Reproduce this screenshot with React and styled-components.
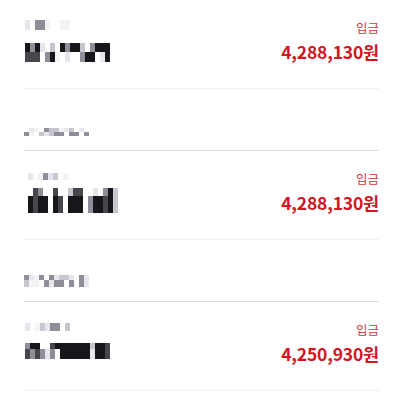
import React from 'react';
import styled, { createGlobalStyle } from 'styled-components';

// Estilos globais da página.
const GlobalStyle = createGlobalStyle`
    html, body {
        margin: 0;
        padding: 0;
        background: #fff;
    }
    body {
        font-family: "Noto Sans CJK KR", "Noto Sans", sans-serif;
    }
`;

// Tons usados no mosaico que esconde os dados pessoais.
const SHADES = {
    f: '#f3f3f6',
    a: '#e6e6ec',
    b: '#c6c6ce',
    c: '#8e8e98',
    d: '#46464c',
    e: '#17171b',
};

const Page = styled.div`
    padding: 0 21px 0 24px;
`;

const Item = styled.div`
    display: flex;
    justify-content: space-between;
    align-items: flex-start;
    height: 89px;
    box-sizing: border-box;
    padding-top: 20px;
    border-bottom: 1px solid #f0f0f3;
`;

const Left = styled.div`
    display: flex;
    flex-direction: column;
    gap: ${(props) => props.gap}px;
    padding-top: ${(props) => props.top || 0}px;
    padding-left: ${(props) => props.indent || 0}px;
`;

const Right = styled.div`
    display: flex;
    flex-direction: column;
    align-items: flex-end;
    gap: 6px;
`;

const Kind = styled.span`
    font-size: 12.5px;
    line-height: 15px;
    color: #d3343a;
`;

const Amount = styled.span`
    font-size: 17.5px;
    line-height: 22px;
    font-weight: 700;
    color: #d2161e;
    letter-spacing: -0.2px;
`;

const DateHeader = styled.div`
    height: 62px;
    box-sizing: border-box;
    padding-top: ${(props) => props.top}px;
    border-bottom: 1px solid #dcdce0;
`;

const MosaicSvg = styled.svg`
    display: block;
`;

// Desenha um bloco pixelizado a partir de linhas de caracteres.
function Mosaic({ rows, heights, cell = 5 }) {
    const width = Math.max(...rows.map((r) => r.length)) * cell;
    const height = heights.reduce((s, h) => s + h, 0);
    let y = 0;
    const rects = [];
    rows.forEach((row, ri) => {
        row.split('').forEach((ch, ci) => {
            if (SHADES[ch]) {
                rects.push(
                    <rect key={`${ri}-${ci}`} x={ci * cell} y={y} width={cell} height={heights[ri]} fill={SHADES[ch]} />
                );
            }
        });
        y += heights[ri];
    });
    return (
        <MosaicSvg width={width} height={height} viewBox={`0 0 ${width} ${height}`} shapeRendering="crispEdges">
            {rects}
        </MosaicSvg>
    );
}

const entries = [
    {
        caption: { rows: ['a.ccf..ff'], heights: [10] },
        name: { rows: ['ecea.b.eceeb.ceee', 'ddd.cef.a..cee.ae'], heights: [9, 10] },
        gap: 13,
        top: 0,
        indent: 1,
        amount: '4,288,130원',
    },
    {
        header: { rows: ['.af.cbbfab.a.', 'cf.babcc.cc.c'], heights: [4, 4], top: 39 },
        caption: { rows: ['a.fcab.f'], heights: [7] },
        name: { rows: ['.dc..d..bdd..a.ceb', 'edee.ed.eee.ceedeb'], heights: [8, 17] },
        gap: 8,
        top: 2,
        indent: 4,
        amount: '4,288,130원',
    },
    {
        header: { rows: ['cafc.cabba.ca', 'bff.cacc.c.ca'], heights: [5, 7], top: 35 },
        caption: { rows: ['a.fbacc.b'], heights: [8] },
        name: { rows: ['cee..deeeeeeebeed', 'dcdcac.eeeeeeaeed'], heights: [6, 10] },
        gap: 12,
        top: 1,
        indent: 1,
        amount: '4,250,930원',
    },
];

function App() {
    return (
        <>
            <GlobalStyle />
            <Page>
                {entries.map((entry, i) => (
                    <React.Fragment key={i}>
                        {entry.header && (
                            <DateHeader top={entry.header.top}>
                                <Mosaic rows={entry.header.rows} heights={entry.header.heights} />
                            </DateHeader>
                        )}
                        <Item>
                            <Left gap={entry.gap} top={entry.top} indent={entry.indent}>
                                <Mosaic rows={entry.caption.rows} heights={entry.caption.heights} />
                                <Mosaic rows={entry.name.rows} heights={entry.name.heights} />
                            </Left>
                            <Right>
                                <Kind>입금</Kind>
                                <Amount>{entry.amount}</Amount>
                            </Right>
                        </Item>
                    </React.Fragment>
                ))}
            </Page>
        </>
    );
}

export default App;
